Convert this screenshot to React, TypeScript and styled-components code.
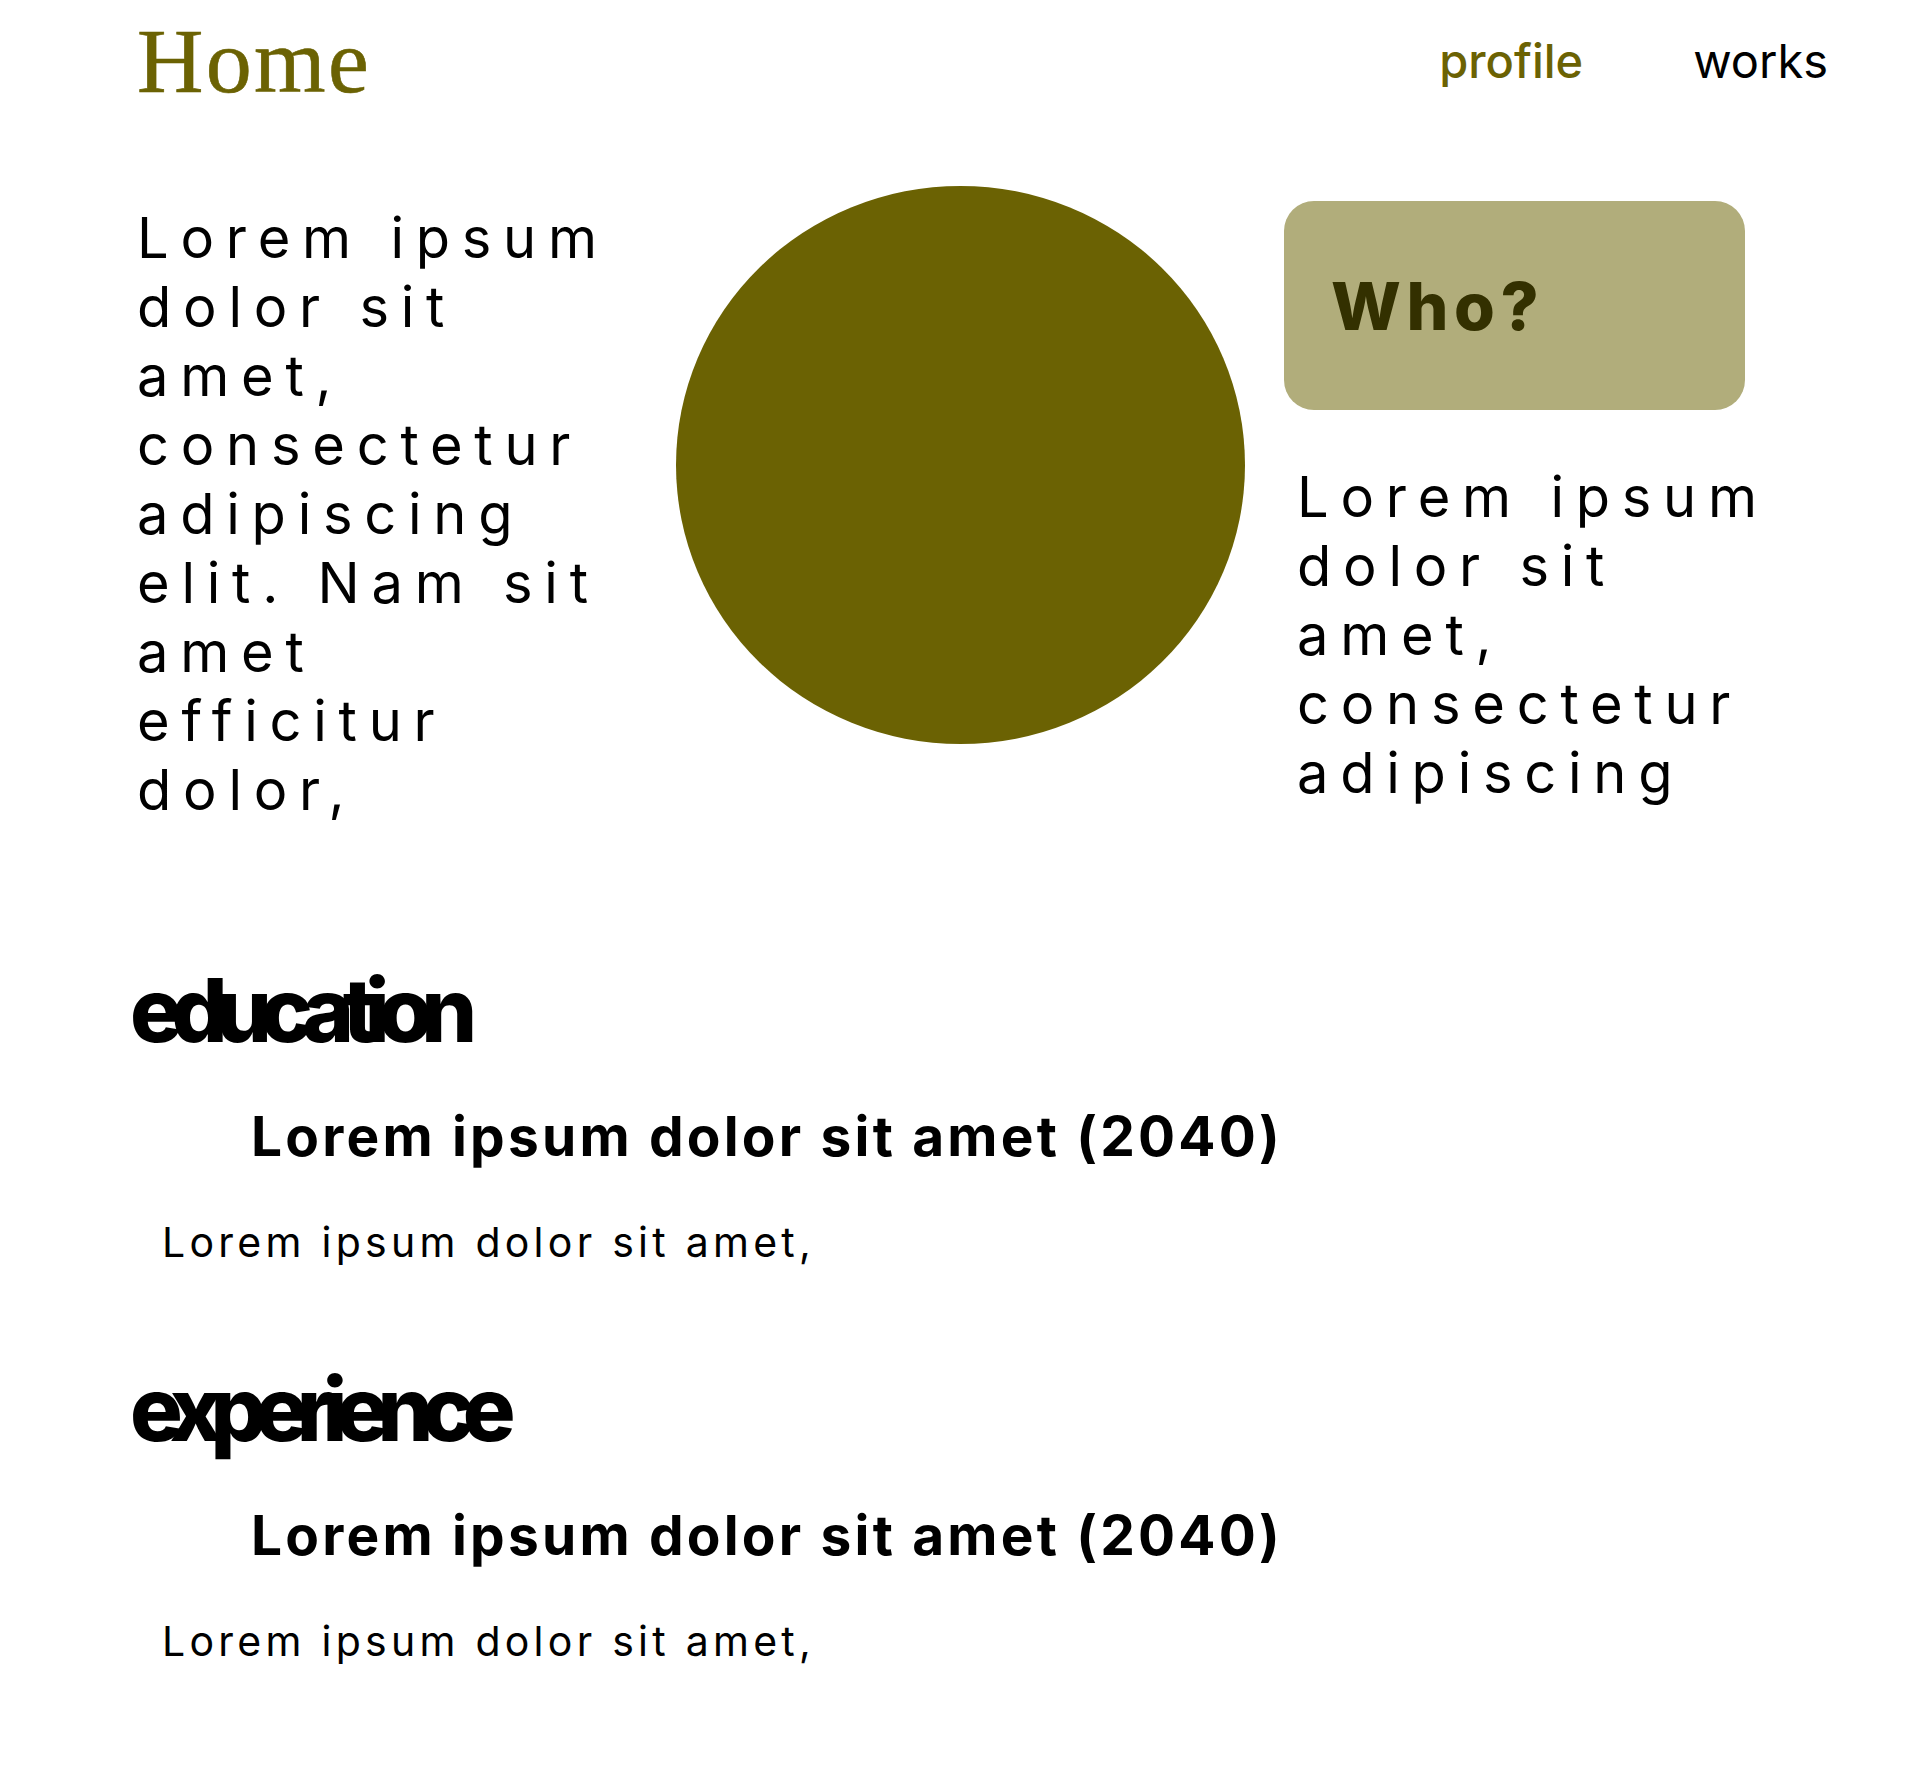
import React from "react";
import styled, { createGlobalStyle } from "styled-components";

const GlobalStyle = createGlobalStyle`
  html, body {
    margin: 0;
    padding: 0;
    background: #ffffff;
  }
  body {
    font-family: Inter, "Noto Sans", "Liberation Sans", sans-serif;
    color: #000000;
  }
  * { box-sizing: border-box; }
`;

const OLIVE = "#6b6203";

const Page = styled.div`
  padding: 15px 92px 120px 137px;
`;

const Header = styled.header`
  display: flex;
  align-items: center;
  justify-content: space-between;
`;

const Logo = styled.h1`
  margin: 0;
  font-family: "Liberation Serif", "Times New Roman", serif;
  font-weight: 400;
  font-size: 92px;
  line-height: 1;
  letter-spacing: 0.025em;
  color: ${OLIVE};
  -webkit-text-stroke: 0.6px ${OLIVE};
`;

const Nav = styled.nav`
  display: flex;
  gap: 110px;
  margin-top: -2px;
`;

const NavLink = styled.a<{ $active?: boolean }>`
  font-family: Inter, sans-serif;
  font-size: 47px;
  line-height: 1;
  font-weight: ${(p) => (p.$active ? 500 : 400)};
  text-decoration: none;
  color: ${(p) => (p.$active ? OLIVE : "#000000")};
`;

const Hero = styled.section`
  display: flex;
  align-items: flex-start;
  margin-top: 79px;
`;

const SpacedText = styled.p`
  margin: 0;
  font-size: 56px;
  line-height: 69px;
  letter-spacing: 0.21em;
  font-weight: 400;
`;

const LeftText = styled(SpacedText)`
  width: 490px;
  margin-top: 18px;
`;

const Circle = styled.div`
  flex: none;
  width: 569px;
  height: 558px;
  border-radius: 50%;
  background: ${OLIVE};
  margin-left: 49px;
`;

const RightCol = styled.div`
  display: flex;
  flex-direction: column;
  width: 500px;
  margin-left: 39px;
`;

const Card = styled.div`
  width: 461px;
  height: 209px;
  margin-top: 15px;
  border-radius: 30px;
  background: #b1ad7b;
  display: flex;
  align-items: center;
  padding-left: 47px;
`;

const CardTitle = styled.h2`
  margin: 0;
  font-size: 66px;
  line-height: 1;
  font-weight: 800;
  letter-spacing: 0.085em;
  color: #333000;
`;

const RightText = styled(SpacedText)`
  margin-top: 53px;
  padding-left: 13px;
`;

const Sections = styled.div`
  display: flex;
  flex-direction: column;
  gap: 102px;
  margin-top: 141px;
`;

const Section = styled.section`
  display: flex;
  flex-direction: column;
`;

const SectionTitle = styled.h2`
  margin: 0 0 0 -7px;
  font-size: 88px;
  line-height: 1;
  font-weight: 800;
  letter-spacing: -0.13em;
`;

const EntryTitle = styled.h3`
  margin: 55px 0 0 114px;
  font-size: 55px;
  line-height: 1;
  font-weight: 700;
  letter-spacing: 0.058em;
`;

const EntryBody = styled.p`
  margin: 58px 0 0 25px;
  font-size: 41px;
  line-height: 1;
  font-weight: 400;
  letter-spacing: 0.104em;
`;

const sections = [
  { title: "education", entry: "Lorem ipsum dolor sit amet (2040)", body: "Lorem ipsum dolor sit amet," },
  { title: "experience", entry: "Lorem ipsum dolor sit amet (2040)", body: "Lorem ipsum dolor sit amet," },
];

export default function App() {
  return (
    <>
      <GlobalStyle />
      <Page>
        <Header>
          <Logo>Home</Logo>
          <Nav>
            <NavLink href="#" $active>profile</NavLink>
            <NavLink href="#">works</NavLink>
          </Nav>
        </Header>

        <Hero>
          <LeftText>
            Lorem ipsum dolor sit amet, consectetur adipiscing elit. Nam sit amet efficitur dolor,
          </LeftText>
          <Circle />
          <RightCol>
            <Card>
              <CardTitle>Who?</CardTitle>
            </Card>
            <RightText>Lorem ipsum dolor sit amet, consectetur adipiscing</RightText>
          </RightCol>
        </Hero>

        <Sections>
          {sections.map((s) => (
            <Section key={s.title}>
              <SectionTitle>{s.title}</SectionTitle>
              <EntryTitle>{s.entry}</EntryTitle>
              <EntryBody>{s.body}</EntryBody>
            </Section>
          ))}
        </Sections>
      </Page>
    </>
  );
}
